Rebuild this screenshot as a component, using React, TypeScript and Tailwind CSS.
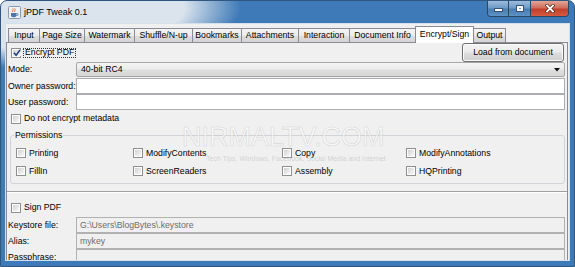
import React from "react";

function Box({ checked = false }: { checked?: boolean }) {
  return (
    <span className="flex w-[10px] h-[10px] shrink-0 border border-[#8e8f8f] bg-white p-px">
      <span className="flex flex-1 items-center justify-center bg-[linear-gradient(135deg,#d2d2d2,#f8f8f8)]">
        {checked && (
          <svg width="8" height="8" viewBox="0 0 8 8" className="shrink-0">
            <path d="M1 3.8 L3.1 6.2 L7 1" stroke="#1f3f7c" strokeWidth="1.5" fill="none" />
          </svg>
        )}
      </span>
    </span>
  );
}

function Perm({ label }: { label: string }) {
  return (
    <div className="flex items-center gap-[3px] h-[18px] whitespace-nowrap">
      <Box />
      <span>{label}</span>
    </div>
  );
}

const tabs = [
  { t: "Input", w: "w-[32px]" },
  { t: "Page Size", w: "w-[46px]" },
  { t: "Watermark", w: "w-[51px]" },
  { t: "Shuffle/N-up", w: "w-[59px]" },
  { t: "Bookmarks", w: "w-[50px]" },
  { t: "Attachments", w: "w-[58px]" },
  { t: "Interaction", w: "w-[52px]" },
  { t: "Document Info", w: "w-[67px]" },
];

function JavaIcon() {
  return (
    <svg width="13" height="13" viewBox="0 0 13 13" className="shrink-0">
      <rect x="0.5" y="0.5" width="12" height="12" rx="1" fill="#eef2f6" stroke="#8a9aab" />
      <path d="M3 7h5.5v2.2a2 2 0 0 1-2 2h-1.5a2 2 0 0 1-2-2z" fill="#4a78b0" />
      <path d="M8.5 7.6h0.8a0.9 0.9 0 0 1 0 1.8h-0.8" stroke="#4a78b0" fill="none" strokeWidth="0.9" />
      <path d="M4.8 6c-1-1 1-2 0-3.5M6.8 6c-1-1 1-2 0-3.5" stroke="#e0532c" fill="none" strokeWidth="0.9" />
    </svg>
  );
}

export default function App() {
  return (
    <div className="relative w-[575px] h-[267px] bg-white overflow-hidden font-['Liberation_Sans',Arial,sans-serif] text-[8.7px] leading-none text-black">
      <div className="w-full h-full rounded-t-[7px] border border-[#2f5780] bg-[radial-gradient(ellipse_190px_62px_at_50px_6px,#dbe4ed_70%,#3e7ab8_100%)] flex flex-col overflow-hidden">
        {/* title bar */}
        <div className="h-[22px] shrink-0 flex items-start pl-[7px]">
          <div className="h-full flex items-center gap-[3px]">
            <JavaIcon />
            <span className="text-[9px] text-black">jPDF Tweak 0.1</span>
          </div>
          <div className="flex-1" />
          <div className="mr-[5px] flex h-[16px] border border-t-0 border-[#2a4766] rounded-b-[4px] overflow-hidden">
            <div className="w-[21px] h-full flex items-end justify-center pb-[4px] border-r border-[#2a4766] bg-[linear-gradient(180deg,#9cbbdc_0%,#6f9bc9_45%,#4a7db3_55%,#5d92c6_100%)]">
              <span className="w-[7px] h-[2px] bg-white border border-[#35536f] box-content" />
            </div>
            <div className="w-[22px] h-full flex items-center justify-center border-r border-[#2a4766] bg-[linear-gradient(180deg,#9cbbdc_0%,#6f9bc9_45%,#4a7db3_55%,#5d92c6_100%)]">
              <span className="w-[6px] h-[5px] border-2 border-white outline outline-1 outline-[#35536f]" />
            </div>
            <div className="w-[37px] h-full flex items-center justify-center bg-[linear-gradient(180deg,#e3a597_0%,#d06e5c_45%,#c2402b_55%,#d45a3f_100%)]">
              <svg width="10" height="9" viewBox="0 0 10 9">
                <path d="M2 1.5 L8 7.5 M8 1.5 L2 7.5" stroke="#5a2118" strokeWidth="3.2" strokeLinecap="square" />
                <path d="M2 1.5 L8 7.5 M8 1.5 L2 7.5" stroke="#ffffff" strokeWidth="1.8" strokeLinecap="square" />
              </svg>
            </div>
          </div>
        </div>

        {/* client area */}
        <div className="flex-1 min-h-0 flex px-[4px] pb-[5px]">
          <div className="flex-1 min-h-0 flex flex-col bg-[#f0f0f0] border border-[#d3dfeb] overflow-hidden">
            {/* tabs */}
            <div className="h-[18px] shrink-0 flex items-end pl-[2px]">
              {tabs.map((tb, i) => (
                <div
                  key={tb.t}
                  className={`${tb.w} ${i > 0 ? "-ml-px" : ""} h-[14px] flex items-center justify-center border border-b-0 border-[#898c95] bg-[linear-gradient(180deg,#f4f4f4_0%,#ebebeb_50%,#dcdcdc_55%,#d4d4d4_100%)] whitespace-nowrap`}
                >
                  {tb.t}
                </div>
              ))}
              <div className="relative z-10 -ml-px -mb-px w-[59px] h-[17px] flex items-center justify-center border border-b-0 border-[#898c95] bg-white whitespace-nowrap pb-[2px]">
                Encrypt/Sign
              </div>
              <div className="-ml-px w-[33px] h-[14px] flex items-center justify-center border border-b-0 border-[#898c95] bg-[linear-gradient(180deg,#f4f4f4_0%,#ebebeb_50%,#dcdcdc_55%,#d4d4d4_100%)] whitespace-nowrap">
                Output
              </div>
            </div>

            {/* panel */}
            <div className="flex-1 min-h-0 mr-px border border-b-0 border-[#898c95] bg-[#f0f0f0] flex flex-col overflow-hidden">
              {/* Encrypt row */}
              <div className="h-[19px] shrink-0 flex items-center justify-between pl-[4px] pr-[3px]">
                <div className="flex items-center gap-[2px]">
                  <Box checked />
                  <span className="border border-dotted border-[#333] px-px h-[10px] flex items-center">Encrypt PDF</span>
                </div>
                <div className="w-[102px] h-[19px] rounded-[3px] border border-[#707070] flex items-center justify-center bg-[linear-gradient(180deg,#f3f3f3_0%,#ebebeb_48%,#dddddd_52%,#cfcfcf_100%)] shadow-[inset_0_0_0_1px_#fbfbfb]">
                  Load from document
                </div>
              </div>

              {/* Mode */}
              <div className="h-[15px] shrink-0 flex items-center pr-[2px]">
                <div className="w-[69px] pl-px whitespace-nowrap">Mode:</div>
                <div className="flex-1 h-full rounded-[2px] border border-[#a7a7a7] bg-[linear-gradient(180deg,#f4f4f4_0%,#ececec_48%,#dfdfdf_52%,#d6d6d6_100%)] flex items-center pl-[4px] pr-[4px]">
                  <span className="flex-1">40-bit RC4</span>
                  <svg width="6" height="4" viewBox="0 0 6 4">
                    <path d="M0 0 H6 L3 3.5 Z" fill="#111" />
                  </svg>
                </div>
              </div>

              {/* Owner */}
              <div className="mt-px h-[16px] shrink-0 flex items-center pr-[2px]">
                <div className="w-[69px] pl-px whitespace-nowrap">Owner password:</div>
                <div className="flex-1 h-full bg-white border border-[#abadb3]" />
              </div>
              {/* User */}
              <div className="h-[16px] shrink-0 flex items-center pr-[2px]">
                <div className="w-[69px] pl-px whitespace-nowrap">User password:</div>
                <div className="flex-1 h-full bg-white border border-[#abadb3]" />
              </div>

              {/* metadata */}
              <div className="h-[17px] shrink-0 flex items-center gap-[3px] pl-[4px]">
                <Box />
                <span>Do not encrypt metadata</span>
              </div>

              {/* Permissions */}
              <fieldset className="mt-[3px] ml-[3px] mr-[2px] shrink-0 border border-[#d0d4d8] rounded-[3px] px-0 pb-[3px] min-w-0">
                <legend className="ml-[3px] px-px h-[10px] leading-[10px]">Permissions</legend>
                <div className="grid grid-cols-[117px_149px_124px_1fr] pl-[5px] pt-[4px]">
                  <Perm label="Printing" />
                  <Perm label="ModifyContents" />
                  <Perm label="Copy" />
                  <Perm label="ModifyAnnotations" />
                  <Perm label="FillIn" />
                  <Perm label="ScreenReaders" />
                  <Perm label="Assembly" />
                  <Perm label="HQPrinting" />
                </div>
              </fieldset>

              {/* separator */}
              <div className="mt-[7px] shrink-0 border-t border-b border-t-[#a0a0a0] border-b-white" />

              {/* sign pdf */}
              <div className="mt-[6px] h-[17px] shrink-0 flex items-center gap-[3px] pl-[4px]">
                <Box />
                <span>Sign PDF</span>
              </div>

              {/* keystore */}
              <div className="mt-px h-[16px] shrink-0 flex items-center pr-[2px]">
                <div className="w-[69px] pl-px whitespace-nowrap">Keystore file:</div>
                <div className="flex-1 h-full bg-[#f0f0f0] border border-[#b1b1b1] flex items-center pl-[3px] text-[#6d6d6d]">
                  G:\Users\BlogBytes\.keystore
                </div>
              </div>
              <div className="h-[16px] shrink-0 flex items-center pr-[2px]">
                <div className="w-[69px] pl-px whitespace-nowrap">Alias:</div>
                <div className="flex-1 h-full bg-[#f0f0f0] border border-[#b1b1b1] flex items-center pl-[3px] text-[#6d6d6d]">
                  mykey
                </div>
              </div>
              <div className="h-[16px] shrink-0 flex items-center pr-[2px]">
                <div className="w-[69px] pl-px whitespace-nowrap">Passphrase:</div>
                <div className="flex-1 h-full bg-[#f0f0f0] border border-[#b1b1b1]" />
              </div>
            </div>
          </div>
        </div>
      </div>

      {/* watermark */}
      <div className="absolute left-[182px] top-[124px] text-[27px] leading-none text-[rgba(255,255,255,0.55)] [-webkit-text-stroke:0.6px_rgba(150,150,150,0.35)] pointer-events-none whitespace-nowrap">
        NIRMALTV.COM
      </div>
      <div className="absolute left-[206px] top-[155px] text-[7px] leading-none text-[rgba(170,170,170,0.45)] pointer-events-none whitespace-nowrap">
        Tech Tips, Windows, Facebook, Social Media and Internet
      </div>
    </div>
  );
}
